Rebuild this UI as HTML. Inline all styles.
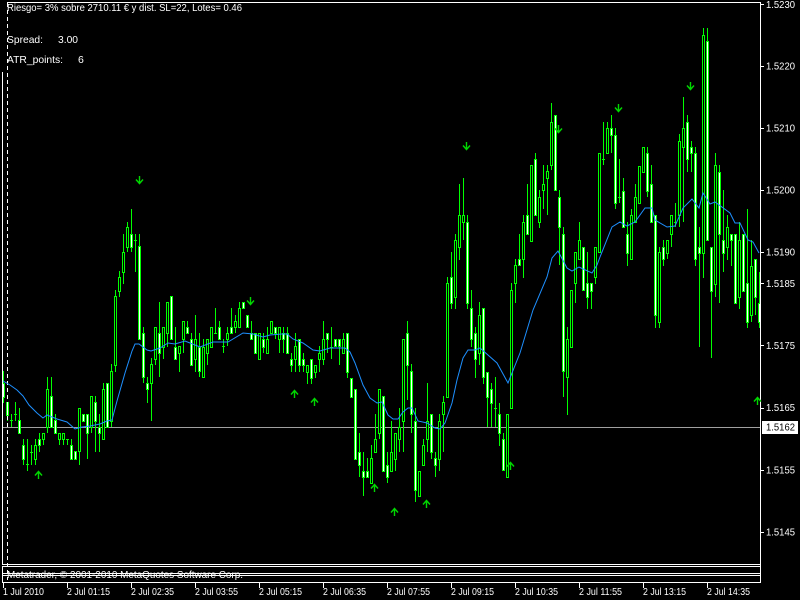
<!DOCTYPE html>
<html><head><meta charset="utf-8"><title>Chart</title>
<style>
html,body{margin:0;padding:0;background:#000;width:800px;height:600px;overflow:hidden}
svg{display:block}
text{font-family:"Liberation Sans",sans-serif;font-size:10.5px;fill:#fff}
</style></head><body>
<svg width="800" height="600" viewBox="0 0 800 600" xmlns="http://www.w3.org/2000/svg">
<rect width="800" height="600" fill="#000"/>
<g shape-rendering="crispEdges" fill="none">
<path stroke="#a0a0a0" d="M3 427.5H760"/>
<path stroke="#00ff00" d="M3.5 371V403M7.5 402V421M11.5 414V427M15.5 402V421M19.5 408V433M23.5 439V465M27.5 439V471M31.5 445V465M35.5 439V465M39.5 433V452M43.5 433V445M47.5 377V433M51.5 377V427M55.5 414V433M59.5 433V445M63.5 433V445M67.5 439V445M71.5 439V459M79.5 408V465M83.5 414V421M87.5 414V459M91.5 396V433M95.5 396V452M99.5 414V452M103.5 383V439M111.5 364V427M115.5 290V372M119.5 271V297M123.5 234V284M127.5 222V252M131.5 209V252M135.5 234V272M139.5 234V339M143.5 327V383M147.5 377V403M151.5 358V421M155.5 327V365M159.5 302V377M163.5 327V359M167.5 302V347M175.5 327V359M179.5 346V372M183.5 321V353M187.5 321V333M191.5 333V365M195.5 315V372M199.5 333V377M203.5 339V377M207.5 339V365M215.5 308V333M219.5 321V339M223.5 339V353M227.5 327V346M231.5 308V333M235.5 315V333M239.5 302V327M251.5 321V339M263.5 333V353M267.5 327V353M275.5 327V339M279.5 327V353M283.5 327V353M287.5 327V353M291.5 353V372M295.5 333V372M299.5 339V372M303.5 353V372M307.5 365V384M311.5 359V384M315.5 365V378M319.5 346V372M323.5 321V365M327.5 333V353M331.5 327V359M339.5 339V365M343.5 333V353M347.5 333V378M359.5 433V477M363.5 452V496M367.5 458V477M371.5 445V483M375.5 414V452M379.5 389V439M387.5 452V483M391.5 421V471M395.5 433V471M399.5 408V452M403.5 339V452M407.5 321V400M411.5 364V433M415.5 408V502M423.5 439V465M427.5 383V452M431.5 414V459M435.5 452V477M439.5 414V471M443.5 396V452M447.5 277V397M451.5 252V309M455.5 234V309M459.5 184V260M463.5 178V240M467.5 215V309M471.5 290V347M475.5 327V378M479.5 302V365M483.5 308V384M487.5 372V427M491.5 383V427M495.5 377V427M499.5 403V446M503.5 433V470M511.5 283V408M515.5 259V303M519.5 234V265M523.5 215V278M527.5 184V234M535.5 153V215M539.5 190V228M543.5 165V209M547.5 165V215M551.5 103V170M559.5 190V265M563.5 227V397M567.5 327V415M575.5 252V303M579.5 222V259M587.5 252V309M591.5 283V309M595.5 247V284M603.5 122V165M607.5 122V153M611.5 115V153M615.5 128V209M619.5 159V203M623.5 178V227M627.5 222V266M631.5 209V259M635.5 184V222M647.5 147V197M651.5 165V222M655.5 215V328M659.5 247V328M663.5 240V266M667.5 240V259M671.5 215V247M675.5 203V227M679.5 134V227M683.5 97V222M687.5 115V172M691.5 141V172M695.5 147V266M699.5 227V347M703.5 28V278M707.5 28V240M711.5 247V358M715.5 153V297M719.5 165V303M723.5 190V272M727.5 215V260M731.5 234V266M739.5 222V309M747.5 209V328M751.5 240V322M755.5 259V315M759.5 272V328"/>
<path stroke="#00ff00" stroke-width="3" d="M3.5 383V398M7.5 402V416M11.5 420V421M15.5 414V415M19.5 420V434M23.5 445V460M27.5 464V465M31.5 452V453M35.5 445V460M39.5 439V446M43.5 433V440M47.5 389V428M51.5 396V428M55.5 420V434M59.5 433V440M63.5 433V440M67.5 439V440M71.5 445V460M75.5 451V460M79.5 408V452M83.5 414V422M87.5 414V434M91.5 396V428M95.5 402V422M99.5 427V434M103.5 389V440M107.5 383V428M111.5 371V422M115.5 296V366M119.5 277V292M123.5 252V273M127.5 227V248M131.5 234V248M135.5 240V241M139.5 246V340M143.5 333V378M147.5 383V390M151.5 364V384M155.5 327V360M159.5 333V354M163.5 327V348M167.5 302V334M171.5 296V340M175.5 347V360M179.5 346V354M183.5 321V340M187.5 327V334M191.5 339V366M195.5 339V360M199.5 347V372M203.5 347V378M207.5 339V354M211.5 327V348M215.5 333V334M219.5 327V340M223.5 346V347M227.5 333V340M231.5 327V334M235.5 321V328M239.5 308V328M243.5 302V309M247.5 315V328M251.5 333V340M255.5 333V354M259.5 333V360M263.5 339V348M267.5 339V354M271.5 321V334M275.5 327V334M279.5 327V340M283.5 333V340M287.5 333V354M291.5 359V366M295.5 346V360M299.5 339V366M303.5 359V366M307.5 365V373M311.5 359V379M315.5 365V373M319.5 353V360M323.5 339V360M327.5 333V340M331.5 347V348M335.5 339V347M339.5 339V347M343.5 339V354M347.5 333V373M351.5 378V398M355.5 389V460M359.5 452V466M363.5 471V478M367.5 471V478M371.5 458V484M375.5 439V453M379.5 389V434M383.5 396V472M387.5 465V478M391.5 452V472M395.5 433V460M399.5 427V440M403.5 339V422M407.5 333V366M411.5 371V415M415.5 421V491M419.5 471V497M423.5 445V466M427.5 421V440M431.5 414V453M435.5 458V466M439.5 421V460M443.5 402V415M447.5 283V398M451.5 277V304M455.5 240V298M459.5 215V248M463.5 215V223M467.5 222V304M471.5 308V340M475.5 333V360M479.5 315V354M483.5 308V378M487.5 372V398M491.5 389V404M495.5 408V409M499.5 414V434M503.5 439V471M507.5 414V478M511.5 290V409M515.5 265V284M519.5 259V266M523.5 222V260M527.5 215V235M531.5 165V242M535.5 159V216M539.5 197V223M543.5 184V191M547.5 171V179M551.5 122V166M555.5 115V191M559.5 197V228M563.5 234V372M567.5 339V378M571.5 290V348M575.5 252V284M579.5 240V260M583.5 247V291M587.5 283V298M591.5 283V292M595.5 247V278M599.5 153V253M603.5 159V160M607.5 128V154M611.5 128V136M615.5 135V204M619.5 197V198M623.5 191V228M627.5 234V254M631.5 215V260M635.5 197V223M639.5 166V204M643.5 147V173M647.5 153V192M651.5 184V223M655.5 215V316M659.5 252V323M663.5 247V260M667.5 240V254M671.5 215V235M675.5 222V223M679.5 141V216M683.5 128V148M687.5 122V160M691.5 147V154M695.5 153V260M699.5 247V254M703.5 35V254M707.5 41V241M711.5 247V292M715.5 165V285M719.5 172V235M723.5 240V254M727.5 227V248M731.5 234V241M735.5 234V304M739.5 240V298M743.5 234V292M747.5 283V323M751.5 266V316M755.5 259V298M759.5 303V323"/>
<path stroke="#000" d="M35.5 446V459M43.5 434V439M47.5 390V427M59.5 434V439M63.5 434V439M79.5 409V451M91.5 397V427M103.5 390V439M111.5 372V421M115.5 297V365M119.5 278V291M123.5 253V272M127.5 228V247M151.5 365V383M155.5 328V359M163.5 328V347M167.5 303V333M179.5 347V353M183.5 322V339M195.5 340V359M203.5 348V377M207.5 340V353M211.5 328V347M227.5 334V339M235.5 322V327M239.5 309V327M259.5 334V359M267.5 340V353M271.5 322V333M279.5 328V339M295.5 347V359M307.5 366V372M315.5 366V372M319.5 354V359M323.5 340V359M343.5 340V353M371.5 459V483M375.5 440V452M379.5 390V433M391.5 453V471M395.5 434V459M399.5 428V439M403.5 340V421M419.5 472V496M423.5 446V465M427.5 422V439M439.5 422V459M443.5 403V414M447.5 284V397M455.5 241V297M459.5 216V247M463.5 216V222M479.5 316V353M507.5 415V477M511.5 291V408M515.5 266V283M523.5 223V259M531.5 166V241M539.5 198V222M543.5 185V190M547.5 172V178M551.5 123V165M567.5 340V377M571.5 291V347M575.5 253V283M579.5 241V259M595.5 248V277M599.5 154V252M607.5 129V153M631.5 216V259M635.5 198V222M639.5 167V203M643.5 148V172M659.5 253V322M667.5 241V253M671.5 216V234M679.5 142V215M683.5 129V147M703.5 36V253M715.5 166V284M727.5 228V247M739.5 241V297M751.5 267V315"/>
<path stroke="#fff" d="M3.5 384V397M7.5 403V415M19.5 421V433M23.5 446V459M39.5 440V445M51.5 397V427M55.5 421V433M71.5 446V459M75.5 452V459M83.5 415V421M87.5 415V433M95.5 403V421M99.5 428V433M107.5 384V427M131.5 235V247M139.5 247V339M143.5 334V377M147.5 384V389M159.5 334V353M171.5 297V339M175.5 348V359M187.5 328V333M191.5 340V365M199.5 348V371M219.5 328V339M231.5 328V333M243.5 303V308M247.5 316V327M251.5 334V339M255.5 334V353M263.5 340V347M275.5 328V333M283.5 334V339M287.5 334V353M291.5 360V365M299.5 340V365M303.5 360V365M311.5 360V378M327.5 334V339M335.5 340V346M339.5 340V346M347.5 334V372M351.5 379V397M355.5 390V459M359.5 453V465M363.5 472V477M367.5 472V477M383.5 397V471M387.5 466V477M407.5 334V365M411.5 372V414M415.5 422V490M431.5 415V452M435.5 459V465M451.5 278V303M467.5 223V303M471.5 309V339M475.5 334V359M483.5 309V377M487.5 373V397M491.5 390V403M499.5 415V433M503.5 440V470M519.5 260V265M527.5 216V234M535.5 160V215M555.5 116V190M559.5 198V227M563.5 235V371M583.5 248V290M587.5 284V297M591.5 284V291M611.5 129V135M615.5 136V203M623.5 192V227M627.5 235V253M647.5 154V191M651.5 185V222M655.5 216V315M663.5 248V259M687.5 123V159M691.5 148V153M695.5 154V259M699.5 248V253M707.5 42V240M711.5 248V291M719.5 173V234M723.5 241V253M731.5 235V240M735.5 235V303M743.5 235V291M747.5 284V322M755.5 260V297M759.5 304V322"/>
<path stroke="#fff" d="M7 2.5H761M2.5 72V565M760.5 2V583M2 564.5H761M2 566.5H761M2 573.5H761M2 575.5H761M2 582.5H761M2.5 566V583"/>
<path stroke="#fff" stroke-dasharray="4 3" d="M7.5 3V580"/>
<path stroke="#fff" d="M761 4.5h3M761 66.5h3M761 128.5h3M761 190.5h3M761 252.5h3M761 283.5h3M761 345.5h3M761 408.5h3M761 470.5h3M761 532.5h3M3.5 583V588M67.5 583V588M131.5 583V588M195.5 583V588M259.5 583V588M323.5 583V588M387.5 583V588M451.5 583V588M515.5 583V588M579.5 583V588M643.5 583V588M707.5 583V588"/>
</g>
<polyline fill="none" stroke="#1e90ff" stroke-width="1" points="3,381 10,385 17,390 23,396 29,405 37,413 43,418 47,415 57,419 67,422 75,429 82,427 90,426 100,424 107,421 112,420 117,401 125,373 132,351 135,344 139,344 147,350 151,351 160,348 168,343 175,344 185,341 190,343 200,347 213,342 228,342 243,333 253,334 263,337 270,335 282,334 287,334 293,339 303,343 313,350 320,351 330,348 345,348 350,352 355,363 363,385 370,398 377,403 382,402 388,415 393,419 398,419 403,412 408,408 412,408 418,421 427,423 435,428 440,429 445,423 452,403 457,380 463,358 468,350 475,350 480,348 497,363 508,383 520,353 533,310 547,277 552,258 558,251 567,268 572,271 579,267 592,273 597,265 600,257 612,227 620,222 627,226 635,222 645,208 652,208 655,220 667,227 675,226 683,208 692,199 699,208 703,193 710,204 715,202 730,213 735,223 740,223 748,240 753,242 759,253"/>
<g fill="none" stroke="#00d800" stroke-width="1.4">
<path d="M38.5 472V479M35 475.5L38.5 471.5L42 475.5M294.5 391V398M291 394.5L294.5 390.5L298 394.5M314.5 399V406M311 402.5L314.5 398.5L318 402.5M374.5 485V492M371 488.5L374.5 484.5L378 488.5M394.5 509V516M391 512.5L394.5 508.5L398 512.5M426.5 501V508M423 504.5L426.5 500.5L430 504.5M510.5 463V470M507 466.5L510.5 462.5L514 466.5M757.5 398V405M754 401.5L757.5 397.5L761 401.5"/>
<path d="M139.5 176V183M136 179.5L139.5 183.5L143 179.5M250.5 297V304M247 300.5L250.5 304.5L254 300.5M466.5 142V149M463 145.5L466.5 149.5L470 145.5M558.5 125V132M555 128.5L558.5 132.5L562 128.5M618.5 104V111M615 107.5L618.5 111.5L622 107.5M690.5 82V89M687 85.5L690.5 89.5L694 85.5"/>
</g>
<rect x="762" y="421" width="36" height="13" fill="#fff"/>
<text x="766" y="430.5" textLength="29" lengthAdjust="spacingAndGlyphs" style="fill:#000">1.5162</text>
<text x="766" y="8" textLength="29" lengthAdjust="spacingAndGlyphs">1.5230</text>
<text x="766" y="69.5" textLength="29" lengthAdjust="spacingAndGlyphs">1.5220</text>
<text x="766" y="131.5" textLength="29" lengthAdjust="spacingAndGlyphs">1.5210</text>
<text x="766" y="193.5" textLength="29" lengthAdjust="spacingAndGlyphs">1.5200</text>
<text x="766" y="255.5" textLength="29" lengthAdjust="spacingAndGlyphs">1.5190</text>
<text x="766" y="287" textLength="29" lengthAdjust="spacingAndGlyphs">1.5185</text>
<text x="766" y="349" textLength="29" lengthAdjust="spacingAndGlyphs">1.5175</text>
<text x="766" y="411" textLength="29" lengthAdjust="spacingAndGlyphs">1.5165</text>
<text x="766" y="473.5" textLength="29" lengthAdjust="spacingAndGlyphs">1.5155</text>
<text x="766" y="535.5" textLength="29" lengthAdjust="spacingAndGlyphs">1.5145</text>
<text x="3" y="595" textLength="41" lengthAdjust="spacingAndGlyphs">1 Jul 2010</text>
<text x="67" y="595" textLength="43" lengthAdjust="spacingAndGlyphs">2 Jul 01:15</text>
<text x="131" y="595" textLength="43" lengthAdjust="spacingAndGlyphs">2 Jul 02:35</text>
<text x="195" y="595" textLength="43" lengthAdjust="spacingAndGlyphs">2 Jul 03:55</text>
<text x="259" y="595" textLength="43" lengthAdjust="spacingAndGlyphs">2 Jul 05:15</text>
<text x="323" y="595" textLength="43" lengthAdjust="spacingAndGlyphs">2 Jul 06:35</text>
<text x="387" y="595" textLength="43" lengthAdjust="spacingAndGlyphs">2 Jul 07:55</text>
<text x="451" y="595" textLength="43" lengthAdjust="spacingAndGlyphs">2 Jul 09:15</text>
<text x="515" y="595" textLength="43" lengthAdjust="spacingAndGlyphs">2 Jul 10:35</text>
<text x="579" y="595" textLength="43" lengthAdjust="spacingAndGlyphs">2 Jul 11:55</text>
<text x="643" y="595" textLength="43" lengthAdjust="spacingAndGlyphs">2 Jul 13:15</text>
<text x="707" y="595" textLength="43" lengthAdjust="spacingAndGlyphs">2 Jul 14:35</text>
<text x="7" y="11" textLength="235" lengthAdjust="spacingAndGlyphs">Riesgo= 3% sobre 2710.11 € y dist. SL=22, Lotes= 0.46</text>
<text x="7" y="43" textLength="36" lengthAdjust="spacingAndGlyphs">Spread:</text>
<text x="58" y="43" textLength="20" lengthAdjust="spacingAndGlyphs">3.00</text>
<text x="7" y="63" textLength="56" lengthAdjust="spacingAndGlyphs">ATR_points:</text>
<text x="78" y="63">6</text>
<text x="7" y="578" textLength="236" lengthAdjust="spacingAndGlyphs">Metatrader, © 2001-2010 MetaQuotes Software Corp.</text>
</svg>
</body></html>
